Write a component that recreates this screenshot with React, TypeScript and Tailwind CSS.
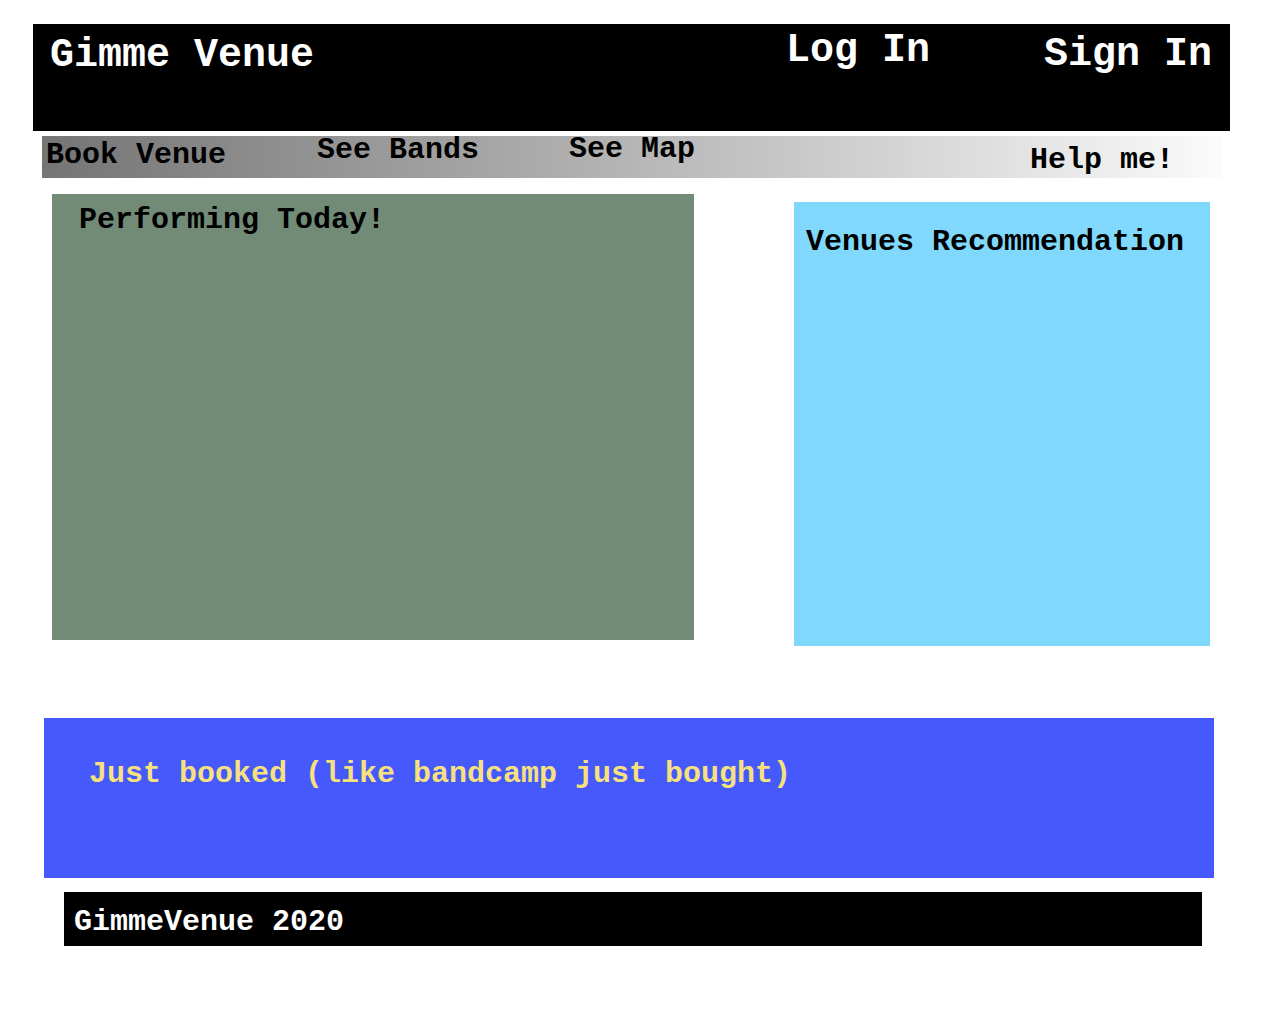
import React from "react";

const mono = { fontFamily: '"Liberation Mono", "Courier New", monospace' };

export default function App() {
  return (
    <div className="w-[1280px] h-[1024px] bg-white font-bold" style={mono}>
      <div className="h-[24px]" />
      {/* Header */}
      <header className="ml-[33px] w-[1197px] h-[107px] bg-black text-white flex items-start text-[40px] leading-none">
        <div className="ml-[17px] mt-[12px] whitespace-nowrap">Gimme Venue</div>
        <div className="ml-[472px] mt-[7px] whitespace-nowrap">Log In</div>
        <div className="ml-[114px] mt-[11px] whitespace-nowrap">Sign In</div>
      </header>
      {/* Nav */}
      <nav className="mt-[5px] ml-[42px] w-[1180px] h-[42px] bg-linear-to-r from-[#757575] to-[#fbfbfb] flex items-start text-black text-[30px] leading-none">
        <div className="ml-[4px] mt-[4px] whitespace-nowrap">Book Venue</div>
        <div className="ml-[91px] -mt-[1px] whitespace-nowrap">See Bands</div>
        <div className="ml-[90px] -mt-[2px] whitespace-nowrap">See Map</div>
        <div className="ml-[335px] mt-[9px] whitespace-nowrap">Help me!</div>
      </nav>
      {/* Main row */}
      <div className="flex items-start mt-[16px]">
        <section className="ml-[52px] w-[642px] h-[446px] bg-[#718b76] text-black text-[30px] leading-none pt-[11px] pl-[27px]">
          Performing Today!
        </section>
        <section className="ml-[100px] mt-[8px] w-[416px] h-[444px] bg-[#80d8fc] text-black text-[30px] leading-none pt-[25px] pl-[12px]">
          Venues Recommendation
        </section>
      </div>
      {/* Just booked */}
      <section className="mt-[72px] ml-[44px] w-[1170px] h-[160px] bg-[#4559fc] text-[#f6e17c] text-[30px] leading-none pt-[41px] pl-[45px] whitespace-nowrap">
        Just booked (like bandcamp just bought)
      </section>
      {/* Footer */}
      <footer className="mt-[14px] ml-[64px] w-[1138px] h-[54px] bg-black text-white text-[30px] leading-none pt-[15px] pl-[10px] whitespace-nowrap">
        GimmeVenue 2020
      </footer>
    </div>
  );
}
